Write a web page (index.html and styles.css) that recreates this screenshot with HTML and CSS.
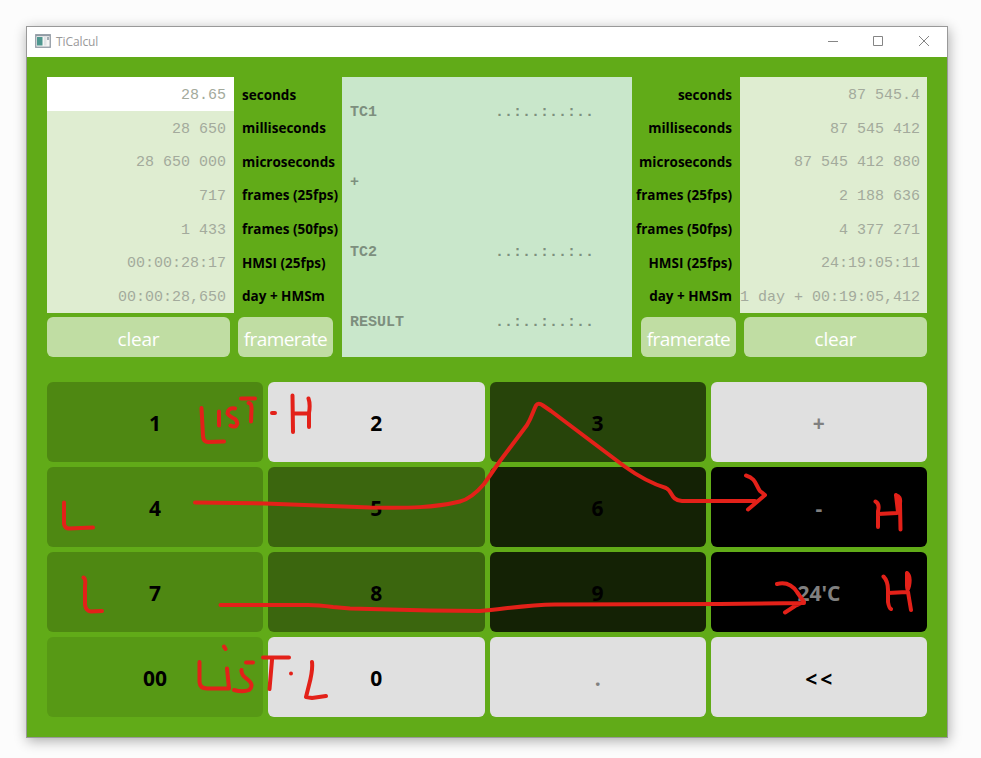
FILE: index.html
```html
<!DOCTYPE html>
<html lang="en">
<head>
<meta charset="utf-8">
<title>TiCalcul</title>
<link rel="stylesheet" href="styles.css">
</head>
<body>
<main class="window">
  <header class="titlebar">
    <svg class="app-icon" width="16" height="14" viewBox="0 0 16 14">
      <rect x=".75" y=".75" width="14.5" height="12.5" fill="#f4f4f4" stroke="#929ba5" stroke-width="1.3"/>
      <path d="M1 1.5H15" stroke="#929ba5" stroke-width="1.4"/>
      <rect x="2" y="3" width="5.5" height="8.5" fill="#4f9790"/>
      <rect x="9" y="3" width="2.500" height="8.5" fill="#dfe3e5"/>
      <rect x="12" y="3" width="2" height="3" fill="#a4adb5"/>
    </svg>
    <h1 class="title">TiCalcul</h1>
    <svg class="controls" width="102" height="12" viewBox="0 0 102 12" fill="none" stroke="#858585">
      <path d="M0 6.5H10M45.5 1.5H54.5V10.5H45.5ZM91 1L101 11M101 1L91 11"/>
    </svg>
  </header>
  <div class="content">
    <section class="top">
      <div class="side">
        <div class="readings">
          <div class="values">
            <span class="active">28.65</span><span>28 650</span><span>28 650 000</span><span>717</span><span>1 433</span><span>00:00:28:17</span><span>00:00:28,650</span>
          </div>
          <div class="labels">
            <span>seconds</span><span>milliseconds</span><span>microseconds</span><span>frames (25fps)</span><span>frames (50fps)</span><span>HMSI (25fps)</span><span>day + HMSm</span>
          </div>
        </div>
        <div class="actions">
          <button class="clear">clear</button><button class="rate">framerate</button>
        </div>
      </div>
      <div class="timecode">
        <div><span>TC1</span><span>..:..:..:..</span></div>
        <div><span>+</span></div>
        <div><span>TC2</span><span>..:..:..:..</span></div>
        <div><span>RESULT</span><span>..:..:..:..</span></div>
      </div>
      <div class="side right">
        <div class="readings">
          <div class="labels">
            <span>seconds</span><span>milliseconds</span><span>microseconds</span><span>frames (25fps)</span><span>frames (50fps)</span><span>HMSI (25fps)</span><span>day + HMSm</span>
          </div>
          <div class="values">
            <span>87 545.4</span><span>87 545 412</span><span>87 545 412 880</span><span>2 188 636</span><span>4 377 271</span><span>24:19:05:11</span><span>1 day + 00:19:05,412</span>
          </div>
        </div>
        <div class="actions">
          <button class="rate">framerate</button><button class="clear">clear</button>
        </div>
      </div>
    </section>
    <section class="keys">
      <button class="shade-2">1</button><button>2</button><button class="shade-4">3</button><button class="muted">+</button>
      <button class="shade-2">4</button><button class="shade-3">5</button><button class="shade-5">6</button><button class="shade-6 muted">-</button>
      <button class="shade-2">7</button><button class="shade-3">8</button><button class="shade-5">9</button><button class="shade-6 muted">24'C</button>
      <button class="shade-1">00</button><button>0</button><button class="muted">.</button><button class="back">&lt;&lt;</button>
    </section>
  </div>
</main>
<svg class="ink" width="981" height="758" viewBox="0 0 981 758">
  <path d="M201.500 408L203 436Q203.500 442 208 442L224 441.500M219 411.500V425.500M235 408.500Q228 407.500 227.500 413.500Q229 416 235 419Q239 423 236 426Q233 427 230.500 425.500M241 398.500H255M248.500 403Q252 403 251.500 410L251 421.500M272 413H275M292.500 395.500L293 432M308.500 398.500Q310.500 404 309 413L309 427M293 413.500H309"/>
  <path d="M64 502.500L64 524Q65 528.500 69 528.500L93 527.500M83.500 577.500Q86 579 85 586L85 605Q86 611 91 611.500L102 611"/>
  <path d="M195 502.500L265 503.500L370 507.500C410 508 433 508 460 501.500C470 499 478 491 484 484L500 461L527 425C532 417 533 411 536 405.500Q538 402 543 405.500L551 411L624 466C642 479 653 484 666 488C673 491 670 500 682 501H755M746 475.500C756 478 756 486 760 491L765 495L758 501L748 509.500"/>
  <path d="M220.500 605H308Q318 605 333 607L350 608.500L430 610.500L480 611C505 609 525 605 555 604.500L720 604L804 603M777 584C787 581.500 793 586 797 592L804 602L795 606L785 612.500"/>
  <path d="M875.500 501.500Q880 504 878 511L878 527M878 514L897 513M896 495.500Q901 496 900 503L900.500 529.500M896 495L898 512L900 512M883.500 576.500Q888 581 888 590L888 602Q889 608 891 609M888 593L907 592M907 573Q911 576 909 586Q907 593 907 585L907 573M908 592L911 610"/>
  <path d="M199.500 662V682Q200 688.500 207 688.500L229 688.500L227 668.500M224 646.500L225.500 649M253 662.500H246M241.500 670Q241 675 247 679Q255 685 249 690Q243 692.500 234 690M263 657.500H289M272 660L269.500 689M312 662Q313 670 309 685L306 697L312 698L326 696"/>
  <circle class="dot" cx="291" cy="673.500" r="2"/>
</svg>
</body>
</html>
```

FILE: styles.css
```css
* { box-sizing: border-box; }
body {
  margin: 0;
  height: 758px;
  padding: 26px;
  background: #fcfcfc;
  font-family: "Open Sans", sans-serif;
  overflow: hidden;
}
.window {
  width: 922px;
  height: 712px;
  border: 1px solid #999;
  background: #61ab18;
  box-shadow: 1px 3px 12px rgba(0, 0, 0, .32);
}
.titlebar {
  display: flex;
  align-items: center;
  height: 30px;
  padding: 0 17px 0 8px;
  background: #fff;
}
.title {
  margin: -1px auto 0 5px;
  font-size: 12px;
  font-weight: 400;
  letter-spacing: -.1px;
  color: #999;
}
.app-icon { margin-top: -2px; }
.controls { margin-top: -2px; }
.content { padding: 20px; }
.top { display: flex; height: 280px; }
.side { width: 295px; }
.readings { display: flex; height: 236px; }
.values, .labels { display: grid; grid-template-rows: repeat(7, 1fr); }
.values {
  width: 187px;
  background: #dfedd1;
  font: 15px "Liberation Mono", monospace;
  color: #a3aa9c;
  text-align: right;
}
.values span {
  display: flex;
  align-items: center;
  justify-content: flex-end;
  padding: 3px 8px 0 0;
  white-space: pre;
}
.right .values span { padding-right: 9px; }
.values .active { background: #fff; }
.labels {
  width: 108px;
  padding: 1px 0 0 8px;
  align-items: center;
  font-size: 13.5px;
  font-weight: 700;
  white-space: nowrap;
}
.right .labels {
  padding: 1px 8px 0 0;
  justify-items: end;
}
.actions {
  display: flex;
  gap: 8px;
  margin-top: 4px;
}
.right .actions { justify-content: flex-end; }
button {
  border: 0;
  padding: 0;
  border-radius: 6px;
  font-family: inherit;
}
.actions button {
  height: 40px;
  padding-top: 3px;
  background: #c0dda3;
  color: #fff;
  font-size: 19px;
  letter-spacing: -.2px;
}
.actions .rate { letter-spacing: -.6px; }
.clear { width: 183px; }
.rate { width: 95px; }
.timecode {
  width: 290px;
  background: #c9e7cb;
  display: grid;
  grid-template-rows: repeat(4, 1fr);
  color: #7d8f7e;
  font: bold 15px "Liberation Mono", monospace;
}
.timecode div {
  display: grid;
  grid-template-columns: 145px 1fr;
  align-items: center;
  padding-left: 8px;
}
.keys {
  display: grid;
  grid-template-columns: repeat(4, 1fr);
  grid-auto-rows: 80px;
  gap: 5px;
  margin-top: 25px;
}
.keys button {
  background: #e0e0e0;
  color: #000;
  font-size: 21px;
  font-weight: 700;
  padding-top: 1px;
}
.keys .shade-1 { background: #579915; }
.keys .shade-2 { background: #4e8812; }
.keys .shade-3 { background: #3b660e; }
.keys .shade-4 { background: #27440a; }
.keys .shade-5 { background: #142205; }
.keys .shade-6 { background: #000; }
.keys .muted { color: #808080; }
.keys .back { letter-spacing: 3px; padding: 3px 0 0 3px; }
/* Freehand marks drawn over the whole window */
.ink {
  position: absolute;
  inset: 0;
  fill: none;
  stroke: #e32119;
  stroke-width: 4;
  stroke-linecap: round;
  stroke-linejoin: round;
  pointer-events: none;
}
.dot { fill: #e32119; stroke: none; }
```
